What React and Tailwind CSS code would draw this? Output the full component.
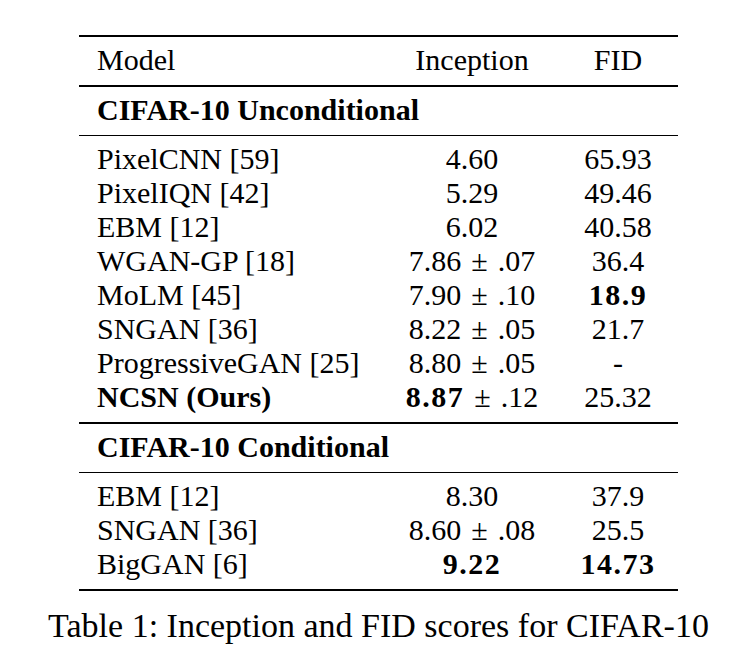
import React from "react";

const unconditional = [
    { model: "PixelCNN [59]", inception: "4.60", fid: "65.93" },
    { model: "PixelIQN [42]", inception: "5.29", fid: "49.46" },
    { model: "EBM [12]", inception: "6.02", fid: "40.58" },
    { model: "WGAN-GP [18]", inception: "7.86", pm: ".07", fid: "36.4" },
    { model: "MoLM [45]", inception: "7.90", pm: ".10", fid: "18.9", fidBold: true },
    { model: "SNGAN [36]", inception: "8.22", pm: ".05", fid: "21.7" },
    { model: "ProgressiveGAN [25]", inception: "8.80", pm: ".05", fid: "-" },
    { model: "NCSN (Ours)", inception: "8.87", pm: ".12", fid: "25.32", modelBold: true, incBold: true },
];

const conditional = [
    { model: "EBM [12]", inception: "8.30", fid: "37.9" },
    { model: "SNGAN [36]", inception: "8.60", pm: ".08", fid: "25.5" },
    { model: "BigGAN [6]", inception: "9.22", fid: "14.73", incBold: true, fidBold: true },
];

const Row = ({ row }) => (
    <div className="grid grid-cols-[307px_172px_120px] h-[34px] leading-[34px] text-[30px] whitespace-nowrap">
        <div className={`pl-[18px] ${row.modelBold ? "font-bold" : ""}`}>{row.model}</div>
        <div className="text-center">
            <span className={row.incBold ? "font-bold tracking-[1.5px]" : ""}>{row.inception}</span>
            {row.pm && (
                <>
                    <span className="mx-[10px]">±</span>
                    <span>{row.pm}</span>
                </>
            )}
        </div>
        <div className={`text-center ${row.fidBold ? "font-bold tracking-[1.5px]" : ""}`}>{row.fid}</div>
    </div>
);

const Section = ({ title }) => (
    <div className="pt-[6px] pb-[8px]">
        <div className="h-[34px] leading-[34px] text-[30px] font-bold pl-[18px] whitespace-nowrap">{title}</div>
    </div>
);

const MidRule = () => <div className="h-[1.5px] bg-black" />;

export default function App() {
    return (
        <div className="min-h-[652px] bg-white text-black font-['Liberation_Serif',serif] pt-[35px]">
            <div className="ml-[79px] w-[599px]">
                <div className="h-[2px] bg-black" />
                <div className="pt-[6px] pb-[8px]">
                    <div className="grid grid-cols-[307px_172px_120px] h-[34px] leading-[34px] text-[30px]">
                        <div className="pl-[18px]">Model</div>
                        <div className="text-center">Inception</div>
                        <div className="text-center">FID</div>
                    </div>
                </div>
                <MidRule />
                <Section title="CIFAR-10 Unconditional" />
                <MidRule />
                <div className="pt-[6px] pb-[8px]">
                    {unconditional.map((row, index) => (
                        <Row key={index} row={row} />
                    ))}
                </div>
                <MidRule />
                <Section title="CIFAR-10 Conditional" />
                <MidRule />
                <div className="pt-[6px] pb-[8px]">
                    {conditional.map((row, index) => (
                        <Row key={index} row={row} />
                    ))}
                </div>
                <div className="h-[2px] bg-black" />
                <div className="flex justify-center mt-[16px]">
                    <p className="text-[34px] leading-[38px] whitespace-nowrap shrink-0">
                        Table 1: Inception and FID scores for CIFAR-10
                    </p>
                </div>
            </div>
        </div>
    );
}
